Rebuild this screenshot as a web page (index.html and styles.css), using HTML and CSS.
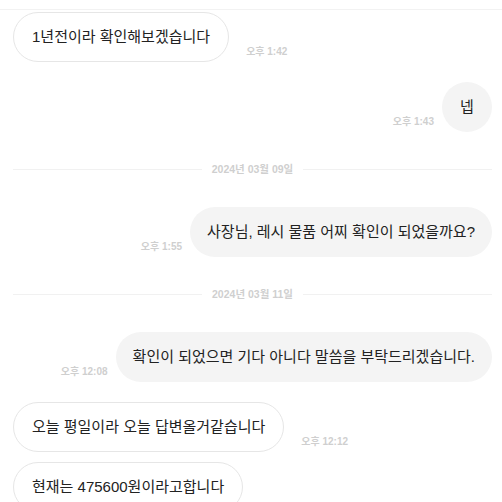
FILE: index.html
```html
<!DOCTYPE html>
<html lang="ko">
<head>
<meta charset="utf-8">
<link rel="stylesheet" href="styles.css">
</head>
<body>
<div class="top"></div>
<div class="chat">
  <div class="row in">
    <div class="bubble white">1년전이라 확인해보겠습니다</div>
    <span class="time">오후 1:42</span>
  </div>
  <div class="row out gap20">
    <span class="time">오후 1:43</span>
    <div class="bubble grey">넵</div>
  </div>
  <div class="sep"><span>2024년 03월 09일</span></div>
  <div class="row out">
    <span class="time">오후 1:55</span>
    <div class="bubble grey">사장님, 레시 물품 어찌 확인이 되었을까요?</div>
  </div>
  <div class="sep"><span>2024년 03월 11일</span></div>
  <div class="row out">
    <span class="time">오후 12:08</span>
    <div class="bubble grey">확인이 되었으면 기다 아니다 말씀을 부탁드리겠습니다.</div>
  </div>
  <div class="row in gap20">
    <div class="bubble white">오늘 평일이라 오늘 답변올거같습니다</div>
    <span class="time">오후 12:12</span>
  </div>
  <div class="row in gap10">
    <div class="bubble white">현재는 475600원이라고합니다</div>
  </div>
</div>
</body>
</html>
```

FILE: styles.css
```css
html, body {
  margin: 0;
  padding: 0;
  background: #fff;
  font-family: "Liberation Sans", "Noto Sans CJK KR", sans-serif;
  color: #222;
  overflow: hidden;
}
.top {
  height: 9px;
  border-bottom: 1px solid #f2f2f2;
}
.chat {
  padding: 2px 10px 0 13px;
  display: flex;
  flex-direction: column;
}
.row {
  display: flex;
  align-items: flex-end;
}
.row.in {
  justify-content: flex-start;
  gap: 17px;
}
.row.out {
  justify-content: flex-end;
  gap: 8px;
}
.gap20 { margin-top: 20px; }
.gap10 { margin-top: 10px; }
.bubble {
  box-sizing: border-box;
  height: 50px;
  min-width: 50px;
  text-align: center;
  padding: 15px 18px;
  border-radius: 25px;
  font-size: 15px;
  line-height: 20px;
  white-space: nowrap;
}
.bubble.white {
  background: #fff;
  border: 1px solid #e6e6e6;
  padding: 14px 18px;
}
.bubble.grey {
  background: #f4f4f4;
  padding: 15px 17px;
}
.time {
  font-size: 10px;
  line-height: 12px;
  font-weight: bold;
  color: #cfcfcf;
  margin-bottom: 4px;
  white-space: nowrap;
}
.sep {
  display: flex;
  align-items: center;
  gap: 10px;
  margin: 31px 0 32px;
  height: 12px;
}
.sep::before, .sep::after {
  content: "";
  flex: 1;
  height: 1px;
  background: #f1f1f1;
}
.sep span {
  font-size: 10.5px;
  line-height: 12px;
  font-weight: bold;
  color: #cfcfcf;
}
```
